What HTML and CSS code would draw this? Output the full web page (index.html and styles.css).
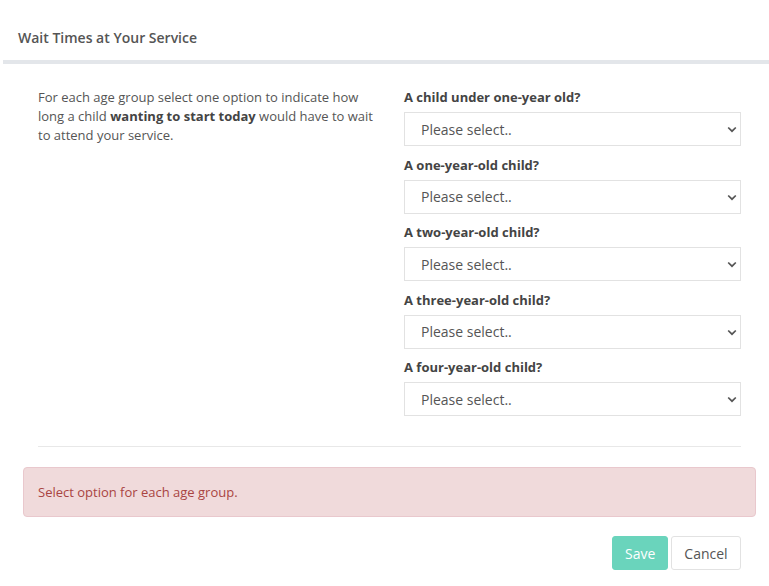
FILE: index.html
```html
<!DOCTYPE html>
<html lang="en">
<head>
<meta charset="utf-8">
<title>Wait Times at Your Service</title>
<link rel="stylesheet" href="styles.css">
</head>
<body>
<div class="panel">
  <div class="panel-header">
    <h2 class="panel-title">Wait Times at Your Service</h2>
  </div>
  <div class="panel-body">
    <div class="row">
      <div class="col">
        <p class="intro">For each age group select one option to indicate how long a child <strong>wanting to start today</strong> would have to wait to attend your service.</p>
      </div>
      <div class="col">
        <div class="field">
          <label class="field-label">A child under one-year old?</label>
          <div class="select-wrap">
            <select class="select"><option>Please select..</option></select>
            <svg class="chev" width="10" height="7" viewBox="0 0 10 7"><path d="M1.2 1.5 L5 5.2 L8.8 1.5" fill="none" stroke="#555" stroke-width="1.7"/></svg>
          </div>
        </div>
        <div class="field">
          <label class="field-label">A one-year-old child?</label>
          <div class="select-wrap">
            <select class="select"><option>Please select..</option></select>
            <svg class="chev" width="10" height="7" viewBox="0 0 10 7"><path d="M1.2 1.5 L5 5.2 L8.8 1.5" fill="none" stroke="#555" stroke-width="1.7"/></svg>
          </div>
        </div>
        <div class="field">
          <label class="field-label">A two-year-old child?</label>
          <div class="select-wrap">
            <select class="select"><option>Please select..</option></select>
            <svg class="chev" width="10" height="7" viewBox="0 0 10 7"><path d="M1.2 1.5 L5 5.2 L8.8 1.5" fill="none" stroke="#555" stroke-width="1.7"/></svg>
          </div>
        </div>
        <div class="field">
          <label class="field-label">A three-year-old child?</label>
          <div class="select-wrap">
            <select class="select"><option>Please select..</option></select>
            <svg class="chev" width="10" height="7" viewBox="0 0 10 7"><path d="M1.2 1.5 L5 5.2 L8.8 1.5" fill="none" stroke="#555" stroke-width="1.7"/></svg>
          </div>
        </div>
        <div class="field">
          <label class="field-label">A four-year-old child?</label>
          <div class="select-wrap">
            <select class="select"><option>Please select..</option></select>
            <svg class="chev" width="10" height="7" viewBox="0 0 10 7"><path d="M1.2 1.5 L5 5.2 L8.8 1.5" fill="none" stroke="#555" stroke-width="1.7"/></svg>
          </div>
        </div>
      </div>
    </div>
    <div class="divider-wrap"><hr class="divider"></div>
    <div class="alert">Select option for each age group.</div>
    <div class="actions">
      <button class="btn btn-save" type="button">Save</button>
      <button class="btn btn-cancel" type="button">Cancel</button>
    </div>
  </div>
</div>
</body>
</html>
```

FILE: styles.css
```css
* { box-sizing: border-box; }
html, body { margin: 0; padding: 0; background: #fff; }
body {
  font-family: "Open Sans", "Liberation Sans", sans-serif;
  font-size: 13px;
  color: #555;
}
.panel { margin-left: 3px; }
.panel-header {
  height: 64px;
  padding: 28px 15px 0;
  border-bottom: 4px solid #e3e6ea;
}
.panel-title {
  margin: 0;
  font-size: 14px;
  font-weight: 600;
  line-height: 20px;
  color: #555;
}
.panel-body { padding: 24px 13px 0 20px; }
.row { display: flex; }
.col { flex: 1 1 0; padding: 0 15px; }
.col:last-child { padding-left: 14px; }
.intro {
  margin: 0;
  line-height: 19px;
  color: #555;
}
.intro strong { font-weight: 700; color: #444; }
.field { margin-bottom: 9.5px; }
.field:last-child { margin-bottom: 0; }
.field-label {
  display: block;
  font-size: 13px;
  font-weight: 700;
  line-height: 18px;
  color: #444;
  margin-bottom: 6px;
}
.select-wrap { position: relative; }
.select {
  display: block;
  width: 100%;
  height: 34px;
  appearance: none;
  -webkit-appearance: none;
  border: 1px solid #e2e2e2;
  border-radius: 0;
  background: #fff;
  padding: 0 16px;
  font-family: "Open Sans", "Liberation Sans", sans-serif;
  font-size: 14px;
  color: #555;
  outline: none;
}
.chev {
  position: absolute;
  right: 4px;
  top: 14px;
  pointer-events: none;
}
.divider-wrap { padding: 30px 15px 0; }
.divider {
  margin: 0;
  border: 0;
  border-top: 1px solid #e8e8e8;
  height: 0;
}
.alert {
  margin-top: 20px;
  height: 50px;
  padding: 0 14px;
  display: flex;
  align-items: center;
  background: #f0dadb;
  border: 1px solid #e9c8cd;
  border-radius: 4px;
  color: #a94442;
  font-size: 13px;
}
.actions {
  display: flex;
  justify-content: flex-end;
  gap: 3px;
  padding: 19px 15px 0;
}
.btn {
  height: 34px;
  border-radius: 3px;
  font-family: "Open Sans", "Liberation Sans", sans-serif;
  font-size: 14px;
  padding: 0 12px;
  cursor: pointer;
}
.btn-save {
  width: 56px;
  background: #6ad4bc;
  border: 1px solid #6ad4bc;
  color: #fff;
}
.btn-cancel {
  width: 70px;
  background: #fff;
  border: 1px solid #e2e2e2;
  color: #555;
}
```
